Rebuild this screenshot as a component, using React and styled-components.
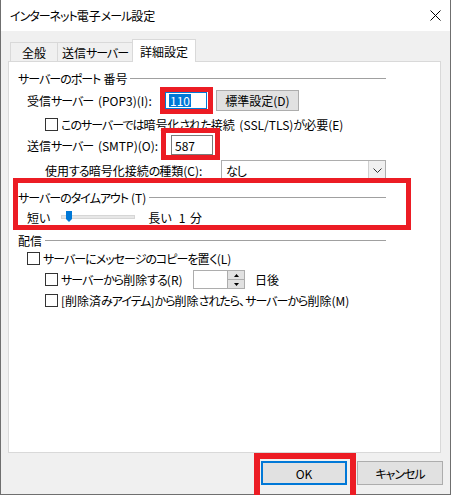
import React from 'react';
import styled, { createGlobalStyle, css } from 'styled-components';

const GlobalStyle = createGlobalStyle`
  html, body { margin: 0; padding: 0; background: #fff; }
  body {
    font-family: "Noto Sans CJK JP", "Noto Sans", sans-serif;
    font-size: 12px;
    color: #000;
    font-feature-settings: "palt";
    word-spacing: 2px;
  }
  * { box-sizing: border-box; }
`;

const RED = '#ec1c24';

// かなは元のUIフォントより幅が広いので詰める
const Kana = styled.span`
  letter-spacing: -1px;
`;

const jp = s =>
  s.split(/([\u3041-\u30ff]+)/).map((part, i) =>
    /[\u3041-\u30ff]/.test(part) ? <Kana key={i}>{part}</Kana> : part
  );

// ウィンドウ全体
const Window = styled.div`
  width: 451px;
  height: 495px;
  display: flex;
  flex-direction: column;
  background: #f0f0f0;
  border: 1px solid #6f6f6f;
  border-top: none;
`;

const TitleBar = styled.div`
  height: 31px;
  flex: none;
  background: #fff;
  display: flex;
  align-items: center;
  justify-content: space-between;
  padding: 0 9px 0 9px;
  line-height: 1;
`;

const Body = styled.div`
  padding: 8px 9px 0 7px;
`;

const TabStrip = styled.div`
  height: 22px;
  display: flex;
  align-items: flex-end;
  padding-left: 2px;
`;

const Tab = styled.div`
  width: ${p => p.$w}px;
  height: 19px;
  display: flex;
  align-items: center;
  justify-content: center;
  border: 1px solid #d9d9d9;
  border-bottom: none;
  background: #f0f0f0;
  margin-left: -1px;
  &:first-child { margin-left: 0; }
  ${p => p.$active && css`
    height: 23px;
    margin-bottom: -1px;
    background: #fff;
    position: relative;
    z-index: 1;
  `}
`;

const Panel = styled.div`
  height: 392px;
  background: #fff;
  border: 1px solid #d9d9d9;
  padding: 8px 54px 0 9px;
`;

// 赤い注目枠(上に重ねる)
const Marked = styled.div`
  position: relative;
  display: ${p => (p.$block ? 'block' : 'inline-flex')};
  &::after {
    content: '';
    position: absolute;
    top: -${p => p.$t}px;
    right: -${p => p.$r}px;
    bottom: -${p => p.$b}px;
    left: -${p => p.$l}px;
    border: ${p => p.$w || 5}px solid ${RED};
    pointer-events: none;
  }
`;

const GroupTitle = styled.div`
  height: 16px;
  margin-top: ${p => p.$mt || 0}px;
  display: flex;
  align-items: center;
  gap: 3px;
  white-space: nowrap;
  &::after {
    content: '';
    flex: 1;
    height: 1px;
    background: #a0a0a0;
  }
`;

const Row = styled.div`
  height: ${p => p.$h}px;
  margin-top: ${p => p.$mt || 0}px;
  padding-left: ${p => p.$indent || 0}px;
  display: flex;
  align-items: center;
  white-space: nowrap;
`;

const Label = styled.span`
  width: ${p => p.$w}px;
  flex: none;
`;

const Field = styled.div`
  width: ${p => p.$w}px;
  height: ${p => p.$h}px;
  border: 1px solid ${p => (p.$focus ? '#0078d7' : '#7a7a7a')};
  background: #fff;
  display: flex;
  align-items: center;
  padding-left: 3px;
`;

const Selected = styled.span`
  background: #0078d7;
  color: #fff;
  padding: 0 1px;
  line-height: 13px;
`;

const Button = styled.div`
  width: ${p => p.$w}px;
  height: ${p => p.$h}px;
  margin-left: ${p => p.$ml || 0}px;
  display: flex;
  align-items: center;
  justify-content: center;
  background: #e1e1e1;
  border: ${p => (p.$default ? '2px solid #0078d7' : '1px solid #adadad')};
`;

const Check = styled.span`
  width: 13px;
  height: 13px;
  flex: none;
  border: 1px solid #333;
  background: #fff;
  margin-right: ${p => p.$gap || 3}px;
`;

const CheckLabel = styled.span`
  display: flex;
  align-items: center;
  width: ${p => (p.$w ? `${p.$w}px` : 'auto')};
  flex: none;
`;

const Combo = styled.div`
  width: ${p => p.$w}px;
  height: 21px;
  border: 1px solid #adadad;
  background: #fff;
  display: flex;
  align-items: center;
  justify-content: space-between;
  padding-left: 4px;
`;

const ComboArrow = styled.div`
  width: 17px;
  height: 100%;
  border-left: 1px solid #cfcfcf;
  background: #f0f0f0;
  display: flex;
  align-items: center;
  justify-content: center;
`;

const Spin = styled.div`
  width: 52px;
  height: 19px;
  border: 1px solid #adadad;
  background: #fff;
  display: flex;
  justify-content: flex-end;
`;

const SpinButtons = styled.div`
  width: 17px;
  display: flex;
  flex-direction: column;
  border-left: 1px solid #adadad;
`;

const SpinHalf = styled.div`
  flex: 1;
  background: #e1e1e1;
  display: flex;
  align-items: center;
  justify-content: center;
  & + & { border-top: 1px solid #adadad; }
`;

const Track = styled.div`
  width: 74px;
  height: 4px;
  margin: 0 13px 0 12px;
  background: #e7e7e7;
  border: 1px solid #d6d6d6;
  position: relative;
`;

const Thumb = styled.svg`
  position: absolute;
  left: 4px;
  top: -5px;
`;

const Footer = styled.div`
  flex: 1;
  display: flex;
  justify-content: flex-end;
  gap: 10px;
  padding: 8px 7px 0 0;
`;

const Spacer = styled.span`
  width: ${p => p.$w}px;
  flex: none;
`;

export default function App() {
  return (
    <>
      <GlobalStyle />
      <Window>
        <TitleBar>
          <span>{jp('インターネット電子メール設定')}</span>
          <svg width="11" height="11" viewBox="0 0 11 11">
            <path d="M0.5 0.5 L10.5 10.5 M10.5 0.5 L0.5 10.5" stroke="#000" strokeWidth="1" />
          </svg>
        </TitleBar>

        <Body>
          <TabStrip>
            <Tab $w={48}>全般</Tab>
            <Tab $w={76}>{jp('送信サーバー')}</Tab>
            <Tab $w={64} $active>詳細設定</Tab>
          </TabStrip>

          <Panel>
            <GroupTitle>{jp('サーバーのポート番号')}</GroupTitle>
            <Row $h={22} $mt={3} $indent={9}>
              <Label $w={138}>{jp('受信サーバー (POP3)(I):')}</Label>
              <Marked $t={5} $r={6} $b={5} $l={5}>
                <Field $w={42} $h={17} $focus>
                  <Selected>110</Selected>
                </Field>
              </Marked>
              <Button $w={83} $h={21} $ml={9}>標準設定(D)</Button>
            </Row>
            <Row $h={16} $mt={5} $indent={27}>
              <CheckLabel>
                <Check />
                {jp('このサーバーでは暗号化された接続 (SSL/TLS) が必要(E)')}
              </CheckLabel>
            </Row>
            <Row $h={22} $mt={2} $indent={9}>
              <Label $w={144}>{jp('送信サーバー (SMTP)(O):')}</Label>
              <Marked $t={7} $r={7} $b={5} $l={10}>
                <Field $w={42} $h={20}>587</Field>
              </Marked>
            </Row>
            <Row $h={22} $mt={3} $indent={27}>
              <Label $w={176}>{jp('使用する暗号化接続の種類(C):')}</Label>
              <Combo $w={165}>
                {jp('なし')}
                <ComboArrow>
                  <svg width="9" height="5" viewBox="0 0 9 5">
                    <path d="M0.5 0.5 L4.5 4.5 L8.5 0.5" fill="none" stroke="#333" strokeWidth="1" />
                  </svg>
                </ComboArrow>
              </Combo>
            </Row>

            <Marked $block $t={11} $r={25} $b={5} $l={5}>
              <GroupTitle $mt={8}>{jp('サーバーのタイムアウト(T)')}</GroupTitle>
              <Row $h={16} $mt={4} $indent={9}>
                <span>{jp('短い')}</span>
                <Track>
                  <Thumb width="6" height="11" viewBox="0 0 6 11">
                    <path d="M0 0 H6 V8 L3 11 L0 8 Z" fill="#0078d7" />
                  </Thumb>
                </Track>
                <span>{jp('長い')}</span>
                <Spacer $w={8} />
                <span>1 分</span>
              </Row>
            </Marked>

            <GroupTitle $mt={7}>配信</GroupTitle>
            <Row $h={16} $mt={2} $indent={9}>
              <CheckLabel>
                <Check />
                {jp('サーバーにメッセージのコピーを置く(L)')}
              </CheckLabel>
            </Row>
            <Row $h={19} $mt={4} $indent={27}>
              <CheckLabel $w={148}>
                <Check />
                {jp('サーバーから削除する(R)')}
              </CheckLabel>
              <Spin>
                <SpinButtons>
                  <SpinHalf>
                    <svg width="5" height="3" viewBox="0 0 5 3"><path d="M0 3 L2.5 0 L5 3 Z" fill="#000" /></svg>
                  </SpinHalf>
                  <SpinHalf>
                    <svg width="5" height="3" viewBox="0 0 5 3"><path d="M0 0 L2.5 3 L5 0 Z" fill="#000" /></svg>
                  </SpinHalf>
                </SpinButtons>
              </Spin>
              <Spacer $w={10} />
              <span>{jp('日後')}</span>
            </Row>
            <Row $h={16} $mt={3} $indent={27}>
              <CheckLabel>
                <Check />
                {jp('[削除済みアイテム] から削除されたら、サーバーから削除(M)')}
              </CheckLabel>
            </Row>
          </Panel>
        </Body>

        <Footer>
          <Marked $t={8} $r={9} $b={9} $l={7} $w={6}>
            <Button $w={86} $h={24} $default>OK</Button>
          </Marked>
          <Button $w={86} $h={24}>{jp('キャンセル')}</Button>
        </Footer>
      </Window>
    </>
  );
}
